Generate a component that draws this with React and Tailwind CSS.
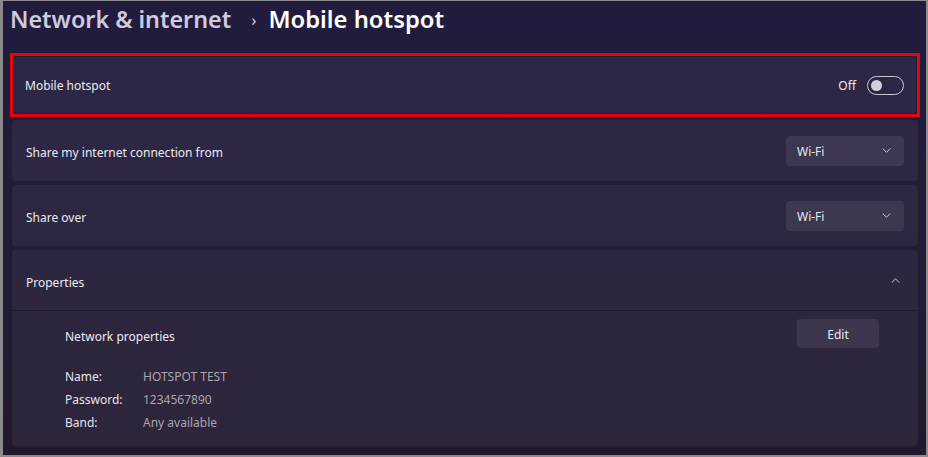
import React from "react";

const font = { fontFamily: '"Noto Sans", "Open Sans", sans-serif' };

const Chevron = ({ up }) => (
  <svg width="9" height="5" viewBox="0 0 9 5" className="text-[#c9c6d1]">
    <path
      d={up ? "M0.7 4.6 L4.5 0.8 L8.3 4.6" : "M0.7 0.5 L4.5 4.3 L8.3 0.5"}
      fill="none"
      stroke="currentColor"
      strokeWidth="1"
    />
  </svg>
);

const Dropdown = ({ value }) => (
  <div className="flex items-center justify-between w-[118px] h-[30px] pl-[11px] pr-[13px] rounded-[4px] bg-white/[0.08] text-[12px] text-[#e9e7ee]">
    <span className="pt-[3px]">{value}</span>
    <Chevron />
  </div>
);

const Card = ({ children, className = "" }) => (
  <div className={`rounded-[4px] bg-white/[0.05] ${className}`}>{children}</div>
);

const Row = ({ label, children }) => (
  <Card className="flex items-center justify-between h-[61px] pl-[14px] pr-[14px]">
    <span className="text-[12px] text-[#eceaf1] pt-[4px]">{label}</span>
    {children}
  </Card>
);

const App = () => {
  return (
    <div
      className="w-[928px] h-[457px] border-l-[3px] border-t border-r-2 border-b-2 border-[#8b8b8b] bg-gradient-to-b from-[#211c3e] via-[#231c38] to-[#22192e] overflow-hidden"
      style={font}
    >
      <div className="flex items-center pl-[7px] h-[40px] pb-[3px]">
        <span className="text-[23.3px] font-semibold text-[#cfcbdc]">Network &amp; internet</span>
        <span className="text-[17px] text-[#cfcbdc] ml-[20px] mr-[12px]">›</span>
        <span className="text-[23.8px] font-semibold text-white">Mobile hotspot</span>
      </div>

      <div className="flex flex-col gap-[4px] pl-[9px] pr-[8px] pt-[12px]">
        <div className="border-[3px] border-[#e6050b] -mx-[2px] -mb-[1px] p-[1px]">
          <Card className="flex items-center justify-between h-[56px] pl-[11px] pr-[12px]">
            <span className="text-[12px] text-[#eceaf1] pt-[2px]">Mobile hotspot</span>
            <div className="flex items-center gap-[11px]">
              <span className="text-[12px] text-[#eceaf1] pt-[2px]">Off</span>
              <div className="w-[37px] h-[19px] rounded-full border border-[#c9c6d1] flex items-center pl-[3px]">
                <div className="w-[11px] h-[11px] rounded-full bg-[#d3d0da]" />
              </div>
            </div>
          </Card>
        </div>

        <Row label="Share my internet connection from">
          <Dropdown value="Wi-Fi" />
        </Row>
        <Row label="Share over">
          <Dropdown value="Wi-Fi" />
        </Row>

        <Card className="flex flex-col">
          <div className="flex items-center justify-between h-[61px] pl-[14px] pr-[18px] border-b border-[#1f1a2c]">
            <span className="text-[12px] text-[#eceaf1] pt-[5px]">Properties</span>
            <Chevron up />
          </div>
          <div className="pl-[53px] pr-[39px] pt-[8px] pb-[14px]">
            <div className="flex items-center justify-between">
              <span className="text-[12px] text-[#eceaf1] pt-[6px]">Network properties</span>
              <div className="w-[82px] h-[29px] pt-[2px] rounded-[4px] bg-white/[0.08] flex items-center justify-center text-[12px] text-[#eceaf1]">
                Edit
              </div>
            </div>
            <div className="grid grid-cols-[78px_1fr] gap-y-[4px] mt-[19px] text-[12px] leading-[19px]">
              <span className="text-[#e6e4ec]">Name:</span>
              <span className="text-[#a9a5b3]">HOTSPOT TEST</span>
              <span className="text-[#e6e4ec]">Password:</span>
              <span className="text-[#a9a5b3]">1234567890</span>
              <span className="text-[#e6e4ec]">Band:</span>
              <span className="text-[#a9a5b3]">Any available</span>
            </div>
          </div>
        </Card>
      </div>
    </div>
  );
};

export default App;
